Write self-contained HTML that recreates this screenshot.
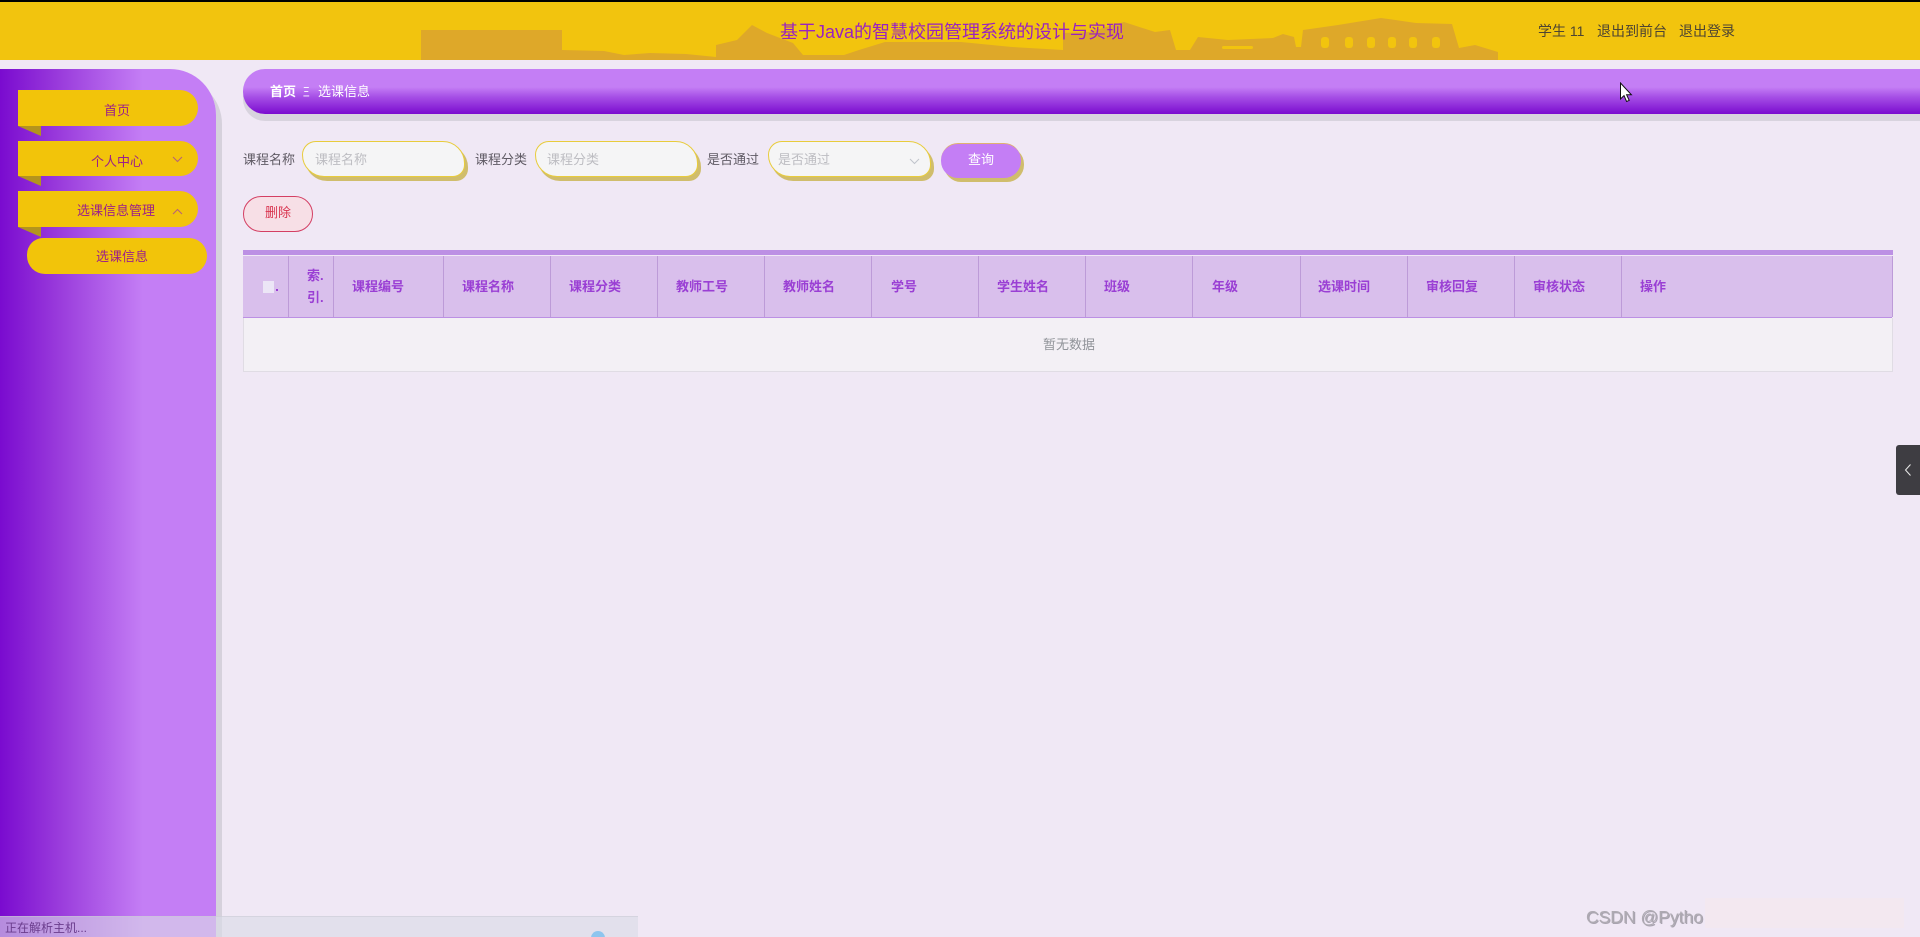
<!DOCTYPE html>
<html lang="zh">
<head>
<meta charset="utf-8">
<title>选课信息</title>
<style>
html,body{margin:0;padding:0;width:1920px;height:937px;overflow:hidden;background:#f0e8f5;}
body{position:relative;font-family:"Liberation Sans","Noto Sans CJK SC",sans-serif;font-size:13px;}
.a{position:absolute;white-space:nowrap;}
.t{position:absolute;white-space:nowrap;line-height:20px;height:20px;}
.menu{position:absolute;left:18px;width:180px;background:#f2c40a;border-radius:0 22px 22px 0;}
.mt{position:absolute;white-space:nowrap;text-align:center;color:#9b1f8a;line-height:20px;font-size:13px;width:180px;}
.inp{position:absolute;top:141px;height:34px;box-sizing:content-box;border:1.5px solid #e8cc3c;background:#f5f5f6;border-radius:15px 24px 13px 24px;box-shadow:3px 4px 0 #d0bd6c;}
.ph{position:absolute;top:150px;line-height:20px;color:#bdbdc2;font-size:13px;white-space:nowrap;}
.lb{position:absolute;top:150px;line-height:20px;color:#5f5a64;font-size:13px;white-space:nowrap;}
.vl{position:absolute;top:256px;width:1px;height:61px;background:#bd9bd8;}
.th{position:absolute;top:277px;line-height:20px;color:#9a3fd4;font-size:13px;font-weight:bold;white-space:nowrap;}
</style>
</head>
<body>
<!-- header -->
<div class="a" style="left:0;top:0;width:1920px;height:2px;background:#000;"></div>
<div class="a" style="left:0;top:2px;width:1920px;height:58px;background:#f2c40e;"></div>
<svg class="a" style="left:0;top:0;" width="1920" height="60" viewBox="0 0 1920 60">
<path fill="#dea829" d="M421 60L421 30L562 30L562 50L604 51L624 55L650 53L686 54L716 57L716 45L737 40L752 25L767 33L793 43L803 55L844 55L859 50L885 42L961 42L1012 47L1063 50L1063 33L1089 32L1124 22L1155 32L1170 30L1176 50L1190 50L1198 37L1228 40L1273 38L1283 34L1294 37L1296 47L1301 47L1303 30L1338 25L1381 18L1416 23L1452 24L1459 48L1475 45L1498 52L1498 60Z"/>
<g fill="#f2c40e">
<rect x="1321" y="37" width="8" height="11" rx="3"/><rect x="1345" y="37" width="8" height="11" rx="3"/><rect x="1367" y="37" width="8" height="11" rx="3"/><rect x="1388" y="37" width="8" height="11" rx="3"/><rect x="1409" y="37" width="8" height="11" rx="3"/><rect x="1432" y="37" width="8" height="11" rx="3"/><rect x="1222" y="46" width="31" height="3" rx="1.5"/>
</g>
</svg>
<div class="t" style="left:780px;top:21px;font-size:18px;color:#9a22c0;line-height:22px;height:22px;">基于Java的智慧校园管理系统的设计与实现</div>
<div class="t" style="left:1538px;top:21px;font-size:14px;color:#4d4432;">学生 11</div>
<div class="t" style="left:1597px;top:21px;font-size:14px;color:#4d4432;">退出到前台</div>
<div class="t" style="left:1679px;top:21px;font-size:14px;color:#4d4432;">退出登录</div>

<!-- sidebar -->
<div class="a" style="left:0;top:69px;width:216px;height:868px;border-radius:0 46px 0 0;background:linear-gradient(90deg,#7a0bcf 0,#9a3cdc 60px,#c47ef5 143px,#c47ef5 216px);box-shadow:6px 9px 0 #d6d1dc;"></div>

<div class="menu" style="top:90px;height:36px;"></div>
<svg class="a" style="left:18px;top:126px;" width="23" height="10"><path d="M0 0H23V10Z" fill="#b3941e"/></svg>
<div class="mt" style="left:27px;top:101px;width:180px;">首页</div>

<div class="menu" style="top:141px;height:35px;"></div>
<svg class="a" style="left:18px;top:176px;" width="23" height="10"><path d="M0 0H23V10Z" fill="#b3941e"/></svg>
<div class="mt" style="left:27px;top:152px;">个人中心</div>
<svg class="a" style="left:172px;top:156px;" width="11" height="7"><path d="M1 1L5.5 5.5L10 1" fill="none" stroke="#b5607a" stroke-width="1"/></svg>

<div class="menu" style="top:191px;height:36px;"></div>
<svg class="a" style="left:18px;top:227px;" width="23" height="10"><path d="M0 0H23V10Z" fill="#b3941e"/></svg>
<div class="mt" style="left:26px;top:201px;">选课信息管理</div>
<svg class="a" style="left:172px;top:208px;" width="11" height="7"><path d="M1 6L5.5 1.5L10 6" fill="none" stroke="#b5607a" stroke-width="1"/></svg>

<div class="a" style="left:27px;top:238px;width:180px;height:36px;background:#f2c40a;border-radius:20px 22px 22px 22px;"></div>
<div class="mt" style="left:32px;top:247px;">选课信息</div>

<!-- breadcrumb -->
<div class="a" style="left:243px;top:69px;width:1700px;height:45px;border-radius:22px 0 0 22px;background:linear-gradient(180deg,#c47ef5 0,#c47ef5 40%,#a64fe6 62%,#7a0bcf 100%);box-shadow:0 7px 0 #d8d3de;"></div>
<div class="t" style="left:270px;top:81px;color:#fff;font-weight:bold;font-size:13px;top:82px;">首页</div>
<div class="t" style="left:303px;top:82px;color:#fff;font-size:12px;transform:scaleX(.55);transform-origin:left center;">三</div>
<div class="t" style="left:318px;top:82px;color:#fff;font-size:13px;">选课信息</div>

<!-- form -->
<div class="lb" style="left:243px;">课程名称</div>
<div class="inp" style="left:302px;width:161px;"></div>
<div class="ph" style="left:315px;">课程名称</div>
<div class="lb" style="left:475px;">课程分类</div>
<div class="inp" style="left:535px;width:161px;"></div>
<div class="ph" style="left:547px;">课程分类</div>
<div class="lb" style="left:707px;">是否通过</div>
<div class="inp" style="left:768px;width:161px;"></div>
<div class="ph" style="left:778px;">是否通过</div>
<svg class="a" style="left:909px;top:158px;" width="11" height="7"><path d="M1 1L5.5 5.5L10 1" fill="none" stroke="#c0c4cc" stroke-width="1"/></svg>
<div class="a" style="left:941px;top:143px;width:80px;height:34px;background:#c47ef5;border-radius:17px;border-top:1px solid #e0b070;box-shadow:3px 4px 0 #d0bd6c;"></div>
<div class="t" style="left:941px;top:150px;width:80px;text-align:center;color:#fff;font-size:13px;">查询</div>

<div class="a" style="left:243px;top:196px;width:68px;height:34px;border:1px solid #d43f63;background:#f7dfe6;border-radius:18px;"></div>
<div class="t" style="left:243px;top:203px;width:70px;text-align:center;color:#d9344f;font-size:13px;">删除</div>

<!-- table -->
<div class="a" style="left:243px;top:250px;width:1650px;height:5px;background:#bc90e4;"></div>
<div class="a" style="left:243px;top:256px;width:1649px;height:61px;background:#d9bfec;"></div>
<div class="a" style="left:243px;top:317px;width:1649px;height:1px;background:#bc90e4;"></div>
<div class="a" style="left:243px;top:318px;width:1648px;height:53px;background:#f3f0f5;border:1px solid #e0dce4;border-top:0;"></div>
<div class="vl" style="left:288px;"></div>
<div class="vl" style="left:333px;"></div>
<div class="vl" style="left:443px;"></div>
<div class="vl" style="left:550px;"></div>
<div class="vl" style="left:657px;"></div>
<div class="vl" style="left:764px;"></div>
<div class="vl" style="left:871px;"></div>
<div class="vl" style="left:978px;"></div>
<div class="vl" style="left:1085px;"></div>
<div class="vl" style="left:1192px;"></div>
<div class="vl" style="left:1300px;"></div>
<div class="vl" style="left:1407px;"></div>
<div class="vl" style="left:1514px;"></div>
<div class="vl" style="left:1621px;"></div>
<div class="vl" style="left:1892px;"></div>
<div class="a" style="left:263px;top:281px;width:11px;height:12px;background:#ece6f6;"></div>
<div class="a" style="left:276px;top:289px;width:2px;height:2px;background:#9a3fd4;"></div>
<div class="th" style="left:307px;top:266px;">索.</div>
<div class="th" style="left:307px;top:288px;">引.</div>
<div class="th" style="left:352px;">课程编号</div>
<div class="th" style="left:462px;">课程名称</div>
<div class="th" style="left:569px;">课程分类</div>
<div class="th" style="left:676px;">教师工号</div>
<div class="th" style="left:783px;">教师姓名</div>
<div class="th" style="left:891px;">学号</div>
<div class="th" style="left:997px;">学生姓名</div>
<div class="th" style="left:1104px;">班级</div>
<div class="th" style="left:1212px;">年级</div>
<div class="th" style="left:1318px;">选课时间</div>
<div class="th" style="left:1426px;">审核回复</div>
<div class="th" style="left:1533px;">审核状态</div>
<div class="th" style="left:1640px;">操作</div>
<div class="t" style="left:1043px;top:335px;color:#909399;font-size:13px;">暂无数据</div>

<!-- side tab -->
<div class="a" style="left:1896px;top:445px;width:24px;height:50px;background:#3e3d42;border-radius:3px 0 0 3px;"></div>
<svg class="a" style="left:1904px;top:463px;" width="8" height="14"><path d="M6.5 1.5L1.5 7L6.5 12.5" fill="none" stroke="#e8e8e8" stroke-width="1"/></svg>

<!-- cursor -->
<svg class="a" style="left:1619px;top:82px;" width="14" height="21" viewBox="0 0 14 21"><path d="M1.5 1V17L5 13.6L7.6 19.5L10.2 18.4L7.6 12.8H12.4Z" fill="#fff" stroke="#111" stroke-width="1"/></svg>

<!-- status bar -->
<div class="a" style="left:0;top:916px;width:638px;height:21px;background:rgba(218,220,230,.62);border-top:1px solid rgba(200,200,210,.5);box-sizing:border-box;overflow:hidden;">
<div class="a" style="left:591px;top:14px;width:14px;height:14px;border-radius:50%;background:#8ec5ee;"></div>
</div>
<div class="t" style="left:5px;top:918px;font-size:12px;color:#6a3c8c;">正在解析主机...</div>

<!-- watermark -->
<div class="a" style="left:1705px;top:898px;width:199px;height:30px;background:#f3e8f0;"></div>
<div class="t" style="left:1586px;top:907px;font-size:17.5px;color:#aeaab2;text-shadow:1px 1px 0 rgba(110,106,116,.55);">CSDN @Pytho</div>
</body>
</html>
